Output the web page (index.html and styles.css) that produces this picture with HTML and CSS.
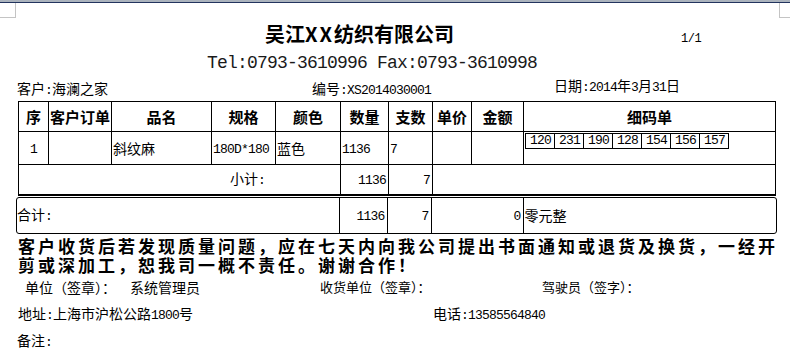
FILE: index.html
```html
<!DOCTYPE html>
<html lang="zh-CN">
<head>
<meta charset="utf-8">
<title>送货单</title>
<link rel="stylesheet" href="styles.css">
</head>
<body>
<div class="topbar"></div>
<div class="mark mark-l"></div>
<div class="mark mark-r"></div>
<main class="page">
  <header class="head">
    <div class="title-row">
      <h1 class="title">吴江<span class="x">XX</span>纺织有限公司</h1>
      <span class="pagenum">1/1</span>
    </div>
    <div class="tel">Tel:0793-3610996 Fax:0793-3610998</div>
    <div class="info">
      <span>客户<span class="n">:</span>海澜之家</span>
      <span class="docno">编号<span class="n">:XS2014030001</span></span>
      <span class="date">日期<span class="n">:2014</span>年<span class="n">3</span>月<span class="n">31</span>日</span>
    </div>
  </header>

  <table class="grid">
    <colgroup>
      <col class="c1"><col class="c2"><col class="c3"><col class="c4"><col class="c5">
      <col class="c6"><col class="c7"><col class="c8"><col class="c9"><col class="c10">
    </colgroup>
    <thead>
      <tr class="hrow">
        <th>序</th><th>客户订单</th><th>品名</th><th>规格</th><th>颜色</th>
        <th>数量</th><th>支数</th><th>单价</th><th>金额</th><th>细码单</th>
      </tr>
    </thead>
    <tbody>
      <tr class="drow">
        <td class="ctr"><span class="n">1</span></td>
        <td></td>
        <td>斜纹麻</td>
        <td><span class="n">180D*180</span></td>
        <td>蓝色</td>
        <td><span class="n">1136</span></td>
        <td><span class="n">7</span></td>
        <td></td>
        <td></td>
        <td class="sizes">
          <div class="boxes">
            <span class="box n">120</span><span class="box n">231</span><span class="box n">190</span><span class="box n">128</span><span class="box n">154</span><span class="box n">156</span><span class="box n">157</span>
          </div>
        </td>
      </tr>
      <tr class="srow">
        <td colspan="5" class="sublabel">小计<span class="n">:</span></td>
        <td class="num"><span class="n">1136</span></td>
        <td class="num"><span class="n">7</span></td>
        <td colspan="3"></td>
      </tr>
    </tbody>
  </table>

  <div class="total">
    <table class="tgrid">
      <colgroup>
        <col class="t1"><col class="t2"><col class="t3"><col class="t4"><col class="t5">
      </colgroup>
      <tr>
        <td class="tlabel">合计<span class="n">:</span></td>
        <td class="num"><span class="n">1136</span></td>
        <td class="num"><span class="n">7</span></td>
        <td class="num"><span class="n">0</span></td>
        <td class="words">零元整</td>
      </tr>
    </table>
  </div>

  <p class="notice">客户收货后若发现质量问题，应在七天内向我公司提出书面通知或退货及换货，一经开剪或深加工，恕我司一概不责任。谢谢合作！</p>

  <div class="signs">
    <span class="s-big">单位（签章）：</span>
    <span class="s-big">系统管理员</span>
    <span>收货单位（签章）：</span>
    <span>驾驶员（签字）：</span>
  </div>

  <div class="addr">
    <span>地址<span class="n">:</span>上海市沪松公路<span class="n">1800</span>号</span>
    <span>电话<span class="n">:13585564840</span></span>
  </div>

  <div class="remark">备注<span class="n">:</span></div>
</main>
</body>
</html>
```

FILE: styles.css
```css
* { box-sizing: border-box; }

html, body {
  margin: 0;
  padding: 0;
  background: #ffffff;
}

body {
  width: 790px;
  height: 349px;
  overflow: hidden;
  position: relative;
  font-family: "Noto Sans CJK SC", "Noto Sans", sans-serif;
  font-size: 14px;
  line-height: 14px;
  color: #000;
}

.topbar {
  height: 3px;
  background: #abb3bd;
  border-bottom: 1px solid #22345e;
}

.mark {
  position: absolute;
  top: 3px;
  height: 15px;
  border-bottom: 1px solid #c4c4c4;
}
.mark-l {
  left: 0;
  width: 16px;
  border-right: 1px solid #c4c4c4;
}
.mark-r {
  left: 779px;
  width: 11px;
  border-left: 1px solid #c4c4c4;
}

.n {
  font-family: "Liberation Mono", monospace;
  font-size: 13px;
  letter-spacing: -0.8px;
}

/* header */
.head {
  padding-top: 21px;
}

.title-row {
  display: flex;
  align-items: baseline;
  height: 20px;
}

.title {
  margin: 0 0 0 265px;
  font-size: 20px;
  line-height: 20px;
  font-weight: 700;
}
.title .x { letter-spacing: 2px; }

.pagenum {
  margin-left: 227px;
  font-family: "Liberation Mono", monospace;
  font-size: 12px;
  letter-spacing: -0.5px;
}

.tel {
  margin: 9px 0 0 207px;
  font-family: "Liberation Mono", monospace;
  font-size: 18px;
  line-height: 20px;
  letter-spacing: -0.8px;
  color: #1a1a1a;
}

.info {
  display: grid;
  grid-template-columns: 295px 242px auto;
  align-items: end;
  margin-top: 5px;
  padding-left: 17px;
  line-height: 14px;
}
.info .date { margin-bottom: 3px; }

/* main table */
.grid {
  margin: 3px 0 0 18px;
  width: 757px;
  border-collapse: collapse;
  table-layout: fixed;
}
.c1 { width: 30px; }
.c2 { width: 63px; }
.c3 { width: 100px; }
.c4 { width: 64px; }
.c5 { width: 65px; }
.c6 { width: 48px; }
.c7 { width: 44px; }
.c8 { width: 39px; }
.c9 { width: 52px; }
.c10 { width: 252px; }

.grid th,
.grid td {
  border: 1px solid #000;
  padding: 0 1px;
  white-space: nowrap;
  overflow: hidden;
}

.grid th {
  font-size: 15px;
  font-weight: 700;
  text-align: center;
}

.hrow { height: 30px; }
.drow { height: 33px; }
.srow { height: 30px; }
.srow td { border-bottom: 2px solid #000; }

.ctr { text-align: center; }
.num { text-align: right; }
.grid .num, .tgrid .num { padding-right: 2px; }

.sublabel { padding-left: 211px !important; }

.sizes { vertical-align: top; padding: 1px 0 0 1px !important; }
.boxes {
  display: flex;
  border-left: 1px solid #000;
  width: max-content;
}
.box {
  height: 16px;
  line-height: 14px;
  padding: 0 3px 0 4px;
  border: 1px solid #000;
  border-left: 0;
}

/* total */
.total {
  margin: 1px 0 0 16px;
  width: 761px;
  height: 37px;
  border: 1px solid #000;
  border-radius: 3px;
}
.tgrid {
  width: 759px;
  height: 35px;
  border-collapse: collapse;
  table-layout: fixed;
}
.t1 { width: 322px; }
.t2 { width: 48px; }
.t3 { width: 44px; }
.t4 { width: 92px; }
.t5 { width: 253px; }
.tgrid td {
  border-left: 1px solid #000;
  padding: 0 1px;
  white-space: nowrap;
}
.tgrid td:first-child { border-left: 0; }
.tlabel { padding-left: 0 !important; }

/* notice */
.notice {
  margin: 2px 0 0 18px;
  width: 770px;
  font-size: 17px;
  line-height: 19px;
  font-weight: 700;
  letter-spacing: 3px;
}

.signs {
  display: grid;
  grid-template-columns: 105px 190px 222px auto;
  align-items: end;
  margin-top: 6px;
  padding-left: 25px;
  font-size: 13px;
  line-height: 14px;
}
.signs .s-big { font-size: 14px; line-height: 14px; }

.addr {
  display: grid;
  grid-template-columns: 415px auto;
  margin-top: 12px;
  padding-left: 18px;
  line-height: 14px;
}

.remark {
  margin-top: 10px;
  padding-left: 17px;
  line-height: 14px;
}
```
